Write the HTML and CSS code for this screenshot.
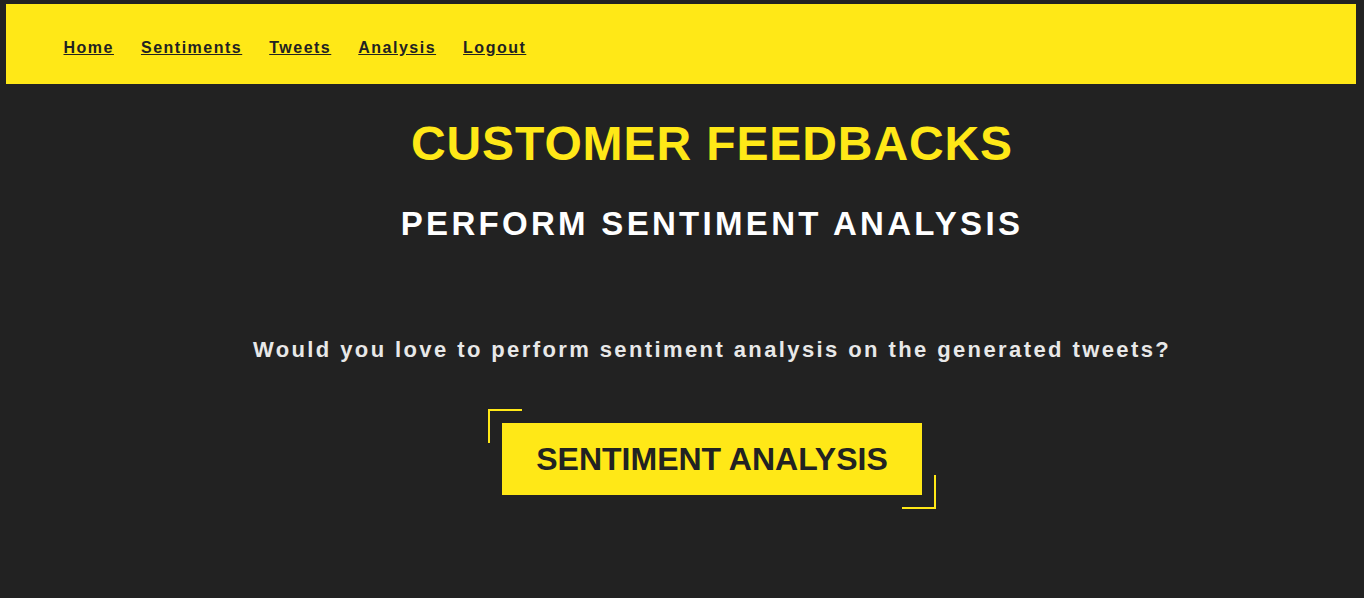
FILE: index.html
```html
<!DOCTYPE html>
<html lang="en">
<head>
<meta charset="utf-8">
<title>Customer Feedbacks</title>
<link rel="stylesheet" href="styles.css">
</head>
<body>
<nav class="topnav">
  <a class="nav-link" href="#">Home</a>
  <a class="nav-link" href="#">Sentiments</a>
  <a class="nav-link" href="#">Tweets</a>
  <a class="nav-link" href="#">Analysis</a>
  <a class="nav-link" href="#">Logout</a>
</nav>
<main class="content">
  <h1 class="title">CUSTOMER FEEDBACKS</h1>
  <h2 class="subtitle">PERFORM SENTIMENT ANALYSIS</h2>
  <p class="question">Would you love to perform sentiment analysis on the generated tweets?</p>
  <a class="cta" href="#">SENTIMENT ANALYSIS</a>
</main>
</body>
</html>
```
FILE: styles.css
```css
html, body {
  margin: 0;
  padding: 0;
}
body {
  background: #222222;
  font-family: "Liberation Sans", Arial, sans-serif;
  height: 598px;
  overflow: hidden;
}
.topnav {
  box-sizing: border-box;
  height: 80px;
  margin: 4px 8px 0 6px;
  background: #ffe817;
  display: flex;
  gap: 27px;
  padding: 35px 0 0 57.5px;
}
.nav-link {
  color: #222222;
  font-size: 16px;
  font-weight: bold;
  letter-spacing: 1.5px;
  text-decoration: underline;
  line-height: normal;
}
.content {
  display: flex;
  flex-direction: column;
  align-items: center;
  padding-left: 60px;
}
.title {
  margin: 32px 0 0;
  color: #ffe817;
  font-size: 48px;
  font-weight: bold;
  letter-spacing: 0.9px;
  line-height: normal;
}
.subtitle {
  margin: 34px 0 0;
  color: #ffffff;
  font-size: 33px;
  font-weight: bold;
  letter-spacing: 3.3px;
  line-height: normal;
}
.question {
  margin: 94px 0 0;
  color: #e8e8e8;
  font-size: 22px;
  font-weight: bold;
  letter-spacing: 2.4px;
  line-height: normal;
}
.cta {
  position: relative;
  margin-top: 60px;
  display: block;
  background: #ffe817;
  color: #222222;
  font-size: 32px;
  font-weight: bold;
  letter-spacing: 0;
  line-height: normal;
  text-decoration: none;
  padding: 17.6px 34.5px;
}
.cta::before,
.cta::after {
  content: "";
  position: absolute;
  width: 32px;
  height: 32px;
  border-color: #ffe817;
  border-style: solid;
}
.cta::before {
  left: -14px;
  top: -14px;
  border-width: 2px 0 0 2px;
}
.cta::after {
  right: -14px;
  bottom: -14px;
  border-width: 0 2px 2px 0;
}
```
